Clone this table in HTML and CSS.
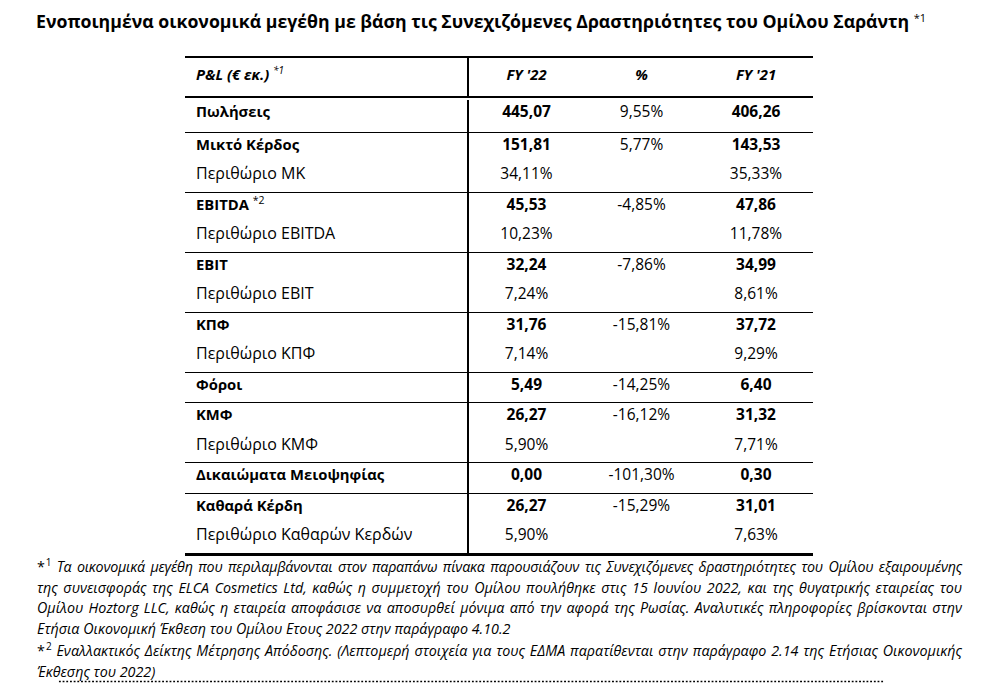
FILE: index.html
```html
<!DOCTYPE html>
<html lang="el">
<head>
<meta charset="utf-8">
<title>Ενοποιημένα οικονομικά μεγέθη</title>
<link rel="stylesheet" href="styles.css">
</head>
<body>
<h1 class="title">Ενοποιημένα οικονομικά μεγέθη με βάση τις Συνεχιζόμενες Δραστηριότητες του Ομίλου Σαράντη <sup class="title-note">*1</sup></h1>

<div class="pl">
  <div class="row head">
    <div class="cell label">P&amp;L (€ εκ.) <sup class="head-note">*1</sup></div>
    <div class="cell">FY '22</div>
    <div class="cell">%</div>
    <div class="cell">FY '21</div>
  </div>

  <div class="group first">
    <div class="row">
      <div class="cell label strong">Πωλήσεις</div>
      <div class="cell num strong">445,07</div>
      <div class="cell num">9,55%</div>
      <div class="cell num strong">406,26</div>
    </div>
  </div>

  <div class="group">
    <div class="row">
      <div class="cell label strong">Μικτό Κέρδος</div>
      <div class="cell num strong">151,81</div>
      <div class="cell num">5,77%</div>
      <div class="cell num strong">143,53</div>
    </div>
    <div class="row">
      <div class="cell label">Περιθώριο ΜΚ</div>
      <div class="cell num">34,11%</div>
      <div class="cell num"></div>
      <div class="cell num">35,33%</div>
    </div>
  </div>

  <div class="group">
    <div class="row">
      <div class="cell label strong">EBITDA <sup class="row-note">*2</sup></div>
      <div class="cell num strong">45,53</div>
      <div class="cell num">-4,85%</div>
      <div class="cell num strong">47,86</div>
    </div>
    <div class="row">
      <div class="cell label">Περιθώριο EBITDA</div>
      <div class="cell num">10,23%</div>
      <div class="cell num"></div>
      <div class="cell num">11,78%</div>
    </div>
  </div>

  <div class="group">
    <div class="row">
      <div class="cell label strong">EBIT</div>
      <div class="cell num strong">32,24</div>
      <div class="cell num">-7,86%</div>
      <div class="cell num strong">34,99</div>
    </div>
    <div class="row">
      <div class="cell label">Περιθώριο EBIT</div>
      <div class="cell num">7,24%</div>
      <div class="cell num"></div>
      <div class="cell num">8,61%</div>
    </div>
  </div>

  <div class="group">
    <div class="row">
      <div class="cell label strong">ΚΠΦ</div>
      <div class="cell num strong">31,76</div>
      <div class="cell num">-15,81%</div>
      <div class="cell num strong">37,72</div>
    </div>
    <div class="row">
      <div class="cell label">Περιθώριο ΚΠΦ</div>
      <div class="cell num">7,14%</div>
      <div class="cell num"></div>
      <div class="cell num">9,29%</div>
    </div>
  </div>

  <div class="group">
    <div class="row">
      <div class="cell label strong">Φόροι</div>
      <div class="cell num strong">5,49</div>
      <div class="cell num">-14,25%</div>
      <div class="cell num strong">6,40</div>
    </div>
  </div>

  <div class="group">
    <div class="row">
      <div class="cell label strong">ΚΜΦ</div>
      <div class="cell num strong">26,27</div>
      <div class="cell num">-16,12%</div>
      <div class="cell num strong">31,32</div>
    </div>
    <div class="row">
      <div class="cell label">Περιθώριο ΚΜΦ</div>
      <div class="cell num">5,90%</div>
      <div class="cell num"></div>
      <div class="cell num">7,71%</div>
    </div>
  </div>

  <div class="group">
    <div class="row">
      <div class="cell label strong">Δικαιώματα Μειοψηφίας</div>
      <div class="cell num strong">0,00</div>
      <div class="cell num">-101,30%</div>
      <div class="cell num strong">0,30</div>
    </div>
  </div>

  <div class="group">
    <div class="row">
      <div class="cell label strong">Καθαρά Κέρδη</div>
      <div class="cell num strong">26,27</div>
      <div class="cell num">-15,29%</div>
      <div class="cell num strong">31,01</div>
    </div>
    <div class="row">
      <div class="cell label">Περιθώριο Καθαρών Κερδών</div>
      <div class="cell num">5,90%</div>
      <div class="cell num"></div>
      <div class="cell num">7,63%</div>
    </div>
  </div>
</div>

<div class="notes">
  <p class="note">
    <span class="line tight"><span class="mark">*<sup>1</sup></span> Τα οικονομικά μεγέθη που περιλαμβάνονται στον παραπάνω πίνακα παρουσιάζουν τις Συνεχιζόμενες δραστηριότητες του Ομίλου εξαιρουμένης</span>
    <span class="line">της συνεισφοράς της ELCA Cosmetics Ltd, καθώς η συμμετοχή του Ομίλου πουλήθηκε στις 15 Ιουνίου 2022, και της θυγατρικής εταιρείας του</span>
    <span class="line">Ομίλου Hoztorg LLC, καθώς η εταιρεία αποφάσισε να αποσυρθεί μόνιμα από την αφορά της Ρωσίας. Αναλυτικές πληροφορίες βρίσκονται στην</span>
    <span class="line last">Ετήσια Οικονομική Έκθεση του Ομίλου Ετους 2022 στην παράγραφο 4.10.2</span>
  </p>
  <p class="note">
    <span class="line"><span class="mark">*<sup>2</sup></span> Εναλλακτικός Δείκτης Μέτρησης Απόδοσης. (Λεπτομερή στοιχεία για τους ΕΔΜΑ παρατίθενται στην παράγραφο 2.14 της Ετήσιας Οικονομικής</span>
    <span class="line last">Έκθεσης του 2022)</span>
  </p>
  <div class="dots"></div>
</div>
</body>
</html>
```
FILE: styles.css
```css
* { box-sizing: border-box; }

body {
  margin: 0;
  background: #fff;
  color: #000;
  font-family: "Open Sans", "Noto Sans", sans-serif;
}

.title {
  margin: 0;
  padding: 10px 0 0 36px;
  font-size: 17.7px;
  line-height: 22px;
  font-weight: 700;
  white-space: nowrap;
}

.title-note {
  font-size: 11px;
  font-weight: 400;
  vertical-align: 6px;
  line-height: 0;
}

.pl {
  margin: 24px 0 0 185px;
  width: 628px;
  border-top: 2px solid #000;
  border-bottom: 3px solid #000;
}

.row {
  display: grid;
  grid-template-columns: 284px 115px 115px 114px;
  height: 29.5px;
}

.cell {
  line-height: 22px;
  text-align: center;
  font-size: 15.5px;
  white-space: nowrap;
}

.label {
  text-align: left;
  padding-left: 11px;
  border-right: 2px solid #000;
  font-size: 16px;
}

.label.strong { font-size: 14.8px; }
.strong { font-weight: 700; }

.head {
  height: 40px;
  border-bottom: 2px solid #000;
}

.head .cell {
  padding-top: 4.5px;
  font-weight: 700;
  font-style: italic;
  font-size: 14.8px;
}

.head-note {
  font-size: 10px;
  font-weight: 400;
  vertical-align: 6px;
  line-height: 0;
}

.row-note {
  font-size: 10.5px;
  font-weight: 400;
  vertical-align: 6px;
  line-height: 0;
}

.group { border-bottom: 1px solid #000; }
.group:last-child { border-bottom: none; }

.group.first .row {
  height: 33.5px;
  padding-top: 1.5px;
}

.notes {
  margin: 1.5px 0 0 37px;
  width: 925px;
  font-style: italic;
  font-size: 14.3px;
  line-height: 20.7px;
}

.note {
  margin: 0 0 1.5px;
}

.line {
  display: block;
  text-align: justify;
  text-align-last: justify;
}

.line.tight {
  letter-spacing: -0.25px;
  word-spacing: -1px;
}

.line.last {
  text-align-last: left;
}

.mark {
  font-style: normal;
}

.mark sup {
  font-size: 10px;
  vertical-align: 6px;
  line-height: 0;
  margin-left: 1px;
}

.dots {
  margin: -4px 0 0 21px;
  width: 826px;
  height: 3px;
  background-image: radial-gradient(circle, #000 0.8px, transparent 1.2px);
  background-size: 3.7px 3px;
  background-repeat: repeat-x;
}
```
